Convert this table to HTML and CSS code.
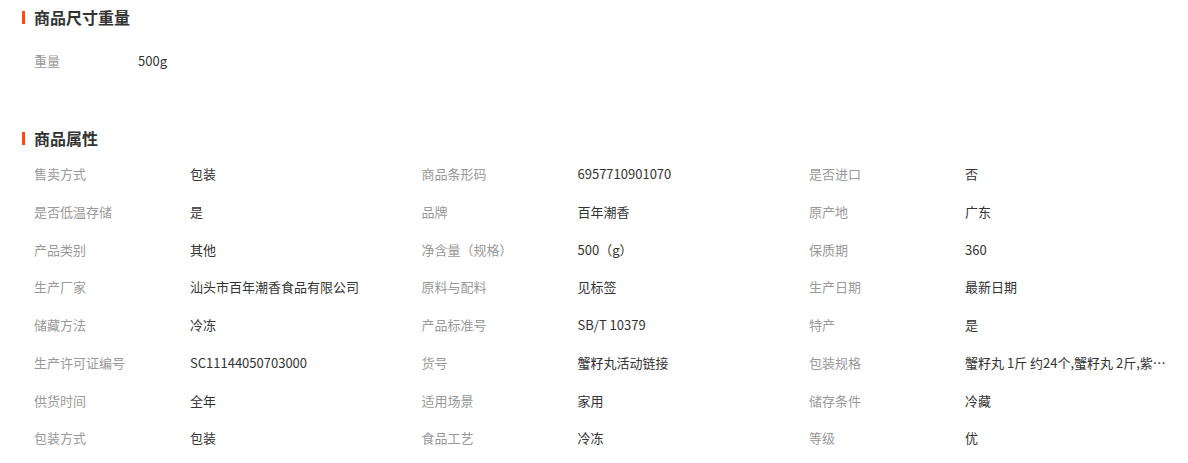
FILE: index.html
```html
<!DOCTYPE html>
<html lang="zh-CN">
<head>
<meta charset="utf-8">
<title>商品属性</title>
<link rel="stylesheet" href="styles.css">
</head>
<body>
<div class="page">
  <section class="block block-size">
    <h2 class="block-title"><span class="bar"></span>商品尺寸重量</h2>
    <div class="size-row">
      <span class="size-label">重量</span>
      <span class="size-value">500g</span>
    </div>
  </section>

  <section class="block block-attrs">
    <h2 class="block-title"><span class="bar"></span>商品属性</h2>
    <div class="attr-grid">
      <div class="cell"><span class="label">售卖方式</span><span class="value">包装</span></div>
      <div class="cell"><span class="label">商品条形码</span><span class="value">6957710901070</span></div>
      <div class="cell"><span class="label">是否进口</span><span class="value">否</span></div>

      <div class="cell"><span class="label">是否低温存储</span><span class="value">是</span></div>
      <div class="cell"><span class="label">品牌</span><span class="value">百年潮香</span></div>
      <div class="cell"><span class="label">原产地</span><span class="value">广东</span></div>

      <div class="cell"><span class="label">产品类别</span><span class="value">其他</span></div>
      <div class="cell"><span class="label">净含量（规格）</span><span class="value">500（g）</span></div>
      <div class="cell"><span class="label">保质期</span><span class="value">360</span></div>

      <div class="cell"><span class="label">生产厂家</span><span class="value">汕头市百年潮香食品有限公司</span></div>
      <div class="cell"><span class="label">原料与配料</span><span class="value">见标签</span></div>
      <div class="cell"><span class="label">生产日期</span><span class="value">最新日期</span></div>

      <div class="cell"><span class="label">储藏方法</span><span class="value">冷冻</span></div>
      <div class="cell"><span class="label">产品标准号</span><span class="value">SB/T 10379</span></div>
      <div class="cell"><span class="label">特产</span><span class="value">是</span></div>

      <div class="cell"><span class="label">生产许可证编号</span><span class="value">SC11144050703000</span></div>
      <div class="cell"><span class="label">货号</span><span class="value">蟹籽丸活动链接</span></div>
      <div class="cell"><span class="label">包装规格</span><span class="value">蟹籽丸 1斤 约24个,蟹籽丸 2斤,紫菜丸 1斤</span></div>

      <div class="cell"><span class="label">供货时间</span><span class="value">全年</span></div>
      <div class="cell"><span class="label">适用场景</span><span class="value">家用</span></div>
      <div class="cell"><span class="label">储存条件</span><span class="value">冷藏</span></div>

      <div class="cell"><span class="label">包装方式</span><span class="value">包装</span></div>
      <div class="cell"><span class="label">食品工艺</span><span class="value">冷冻</span></div>
      <div class="cell"><span class="label">等级</span><span class="value">优</span></div>
    </div>
  </section>
</div>
</body>
</html>
```

FILE: styles.css
```css
html, body {
  margin: 0;
  padding: 0;
  background: #ffffff;
}

body {
  font-family: "Noto Sans CJK SC", "Liberation Sans", sans-serif;
  font-size: 13px;
  line-height: 19px;
  color: #333333;
}

.page {
  width: 1188px;
}

.block-title {
  margin: 0;
  height: 34px;
  display: flex;
  align-items: center;
  padding-left: 22px;
  font-family: "Noto Sans CJK SC", sans-serif;
  font-size: 16px;
  font-weight: 700;
  color: #333333;
}

.bar {
  width: 3px;
  height: 13px;
  background: #ff4a0b;
  margin-right: 9px;
}

.size-row {
  display: flex;
  align-items: center;
  height: 38px;
  margin-top: 7px;
  padding-left: 34px;
}

.size-label {
  width: 104px;
  color: #999999;
}

.size-value {
  color: #333333;
}

.block-attrs {
  margin-top: 42px;
}

.attr-grid {
  display: grid;
  grid-template-columns: repeat(3, 387.5px);
  grid-auto-rows: 37.71px;
  padding-left: 22px;
}

.cell {
  display: flex;
  align-items: center;
  padding-left: 12px;
  min-width: 0;
}

.label {
  flex: 0 0 156px;
  color: #999999;
  white-space: nowrap;
}

.value {
  max-width: 206px;
  color: #333333;
  white-space: nowrap;
  overflow: hidden;
  text-overflow: ellipsis;
}
```
